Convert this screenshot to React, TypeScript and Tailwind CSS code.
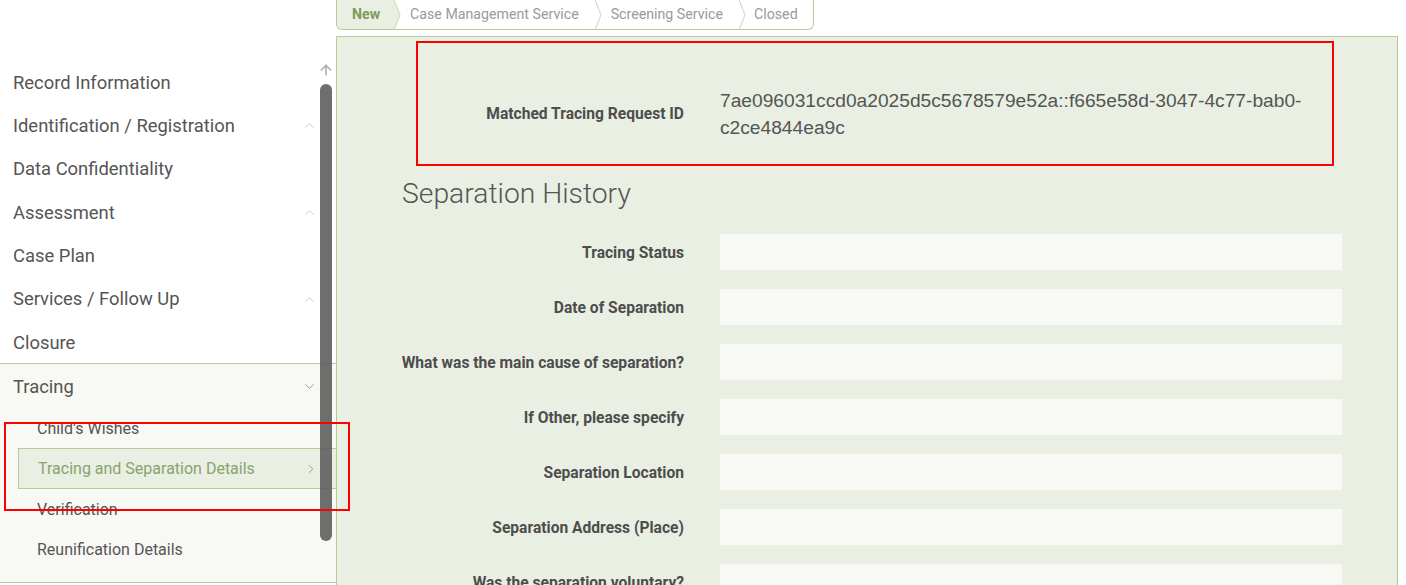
import { ChevronUp, ChevronDown, ChevronRight, ArrowUp } from "lucide-react";

const mainItems = [
    { label: "Record Information", sub: false },
    { label: "Identification / Registration", sub: true },
    { label: "Data Confidentiality", sub: false },
    { label: "Assessment", sub: true },
    { label: "Case Plan", sub: false },
    { label: "Services / Follow Up", sub: true },
    { label: "Closure", sub: false },
];

const tracingItems = ["Child's Wishes", "Tracing and Separation Details", "Verification", "Reunification Details"];

const fields = [
    "Tracing Status",
    "Date of Separation",
    "What was the main cause of separation?",
    "If Other, please specify",
    "Separation Location",
    "Separation Address (Place)",
    "Was the separation voluntary?",
];

function Chevron({ fill }: { fill?: boolean }) {
    return (
        <svg width="10" height="30" viewBox="0 0 10 30" className="shrink-0">
            {fill && <polygon points="0,0 6,15 0,30" fill="#e9efe3" />}
            <polyline points="0,0 6,15 0,30" fill="none" stroke="#c9d8b6" strokeWidth="1" />
        </svg>
    );
}

function Stepper() {
    return (
        <div className="inline-flex h-[30px] items-center rounded-b-md border border-t-0 border-[#b5cc98] pr-[15px] text-[14.2px] text-[#9a9a9a]">
            <div className="flex h-full items-center rounded-bl-md bg-[#e9efe3] pl-[15px] pr-[14px] pt-[1px] font-bold text-[#7d9a5b]">New</div>
            <Chevron fill />
            <div className="pl-[6px] pr-[16px] pt-[1px]">Case Management Service</div>
            <Chevron />
            <div className="pl-[6px] pr-[16px] pt-[1px]">Screening Service</div>
            <Chevron />
            <div className="pl-[5px] pt-[1px]">Closed</div>
        </div>
    );
}

function Sidebar() {
    return (
        <div className="relative w-[336px] shrink-0 pt-[61px] text-[#555]">
            {mainItems.map((item) => (
                <div key={item.label} className="flex h-[43.3px] items-center justify-between pl-[13px] pr-[19px] text-[18.4px]">
                    <span>{item.label}</span>
                    {item.sub && <ChevronUp size={15} strokeWidth={1.5} className="text-[#c4c4c4]" />}
                </div>
            ))}
            <div className="-mt-[1px] border-y border-[#b5cc98] bg-[#f8f9f4] pb-[13px]">
                <div className="flex h-[44px] items-center justify-between pl-[13px] pr-[19px] pt-[1px] text-[18.4px]">
                    <span>Tracing</span>
                    <ChevronDown size={15} strokeWidth={1.5} className="text-[#8aa36c]" />
                </div>
                {tracingItems.map((t) =>
                    t === "Tracing and Separation Details" ? (
                        <div key={t} className="ml-[18px] flex h-[41px] items-center justify-between border border-r-0 border-[#b5cc98] bg-[#e9efe3] pl-[19px] pr-[18px] pt-[1px] text-[16px] text-[#8aa36c]">
                            <span>{t}</span>
                            <ChevronRight size={14} strokeWidth={1.5} />
                        </div>
                    ) : (
                        <div key={t} className="flex h-[40px] items-center pl-[37px] pt-[1px] text-[16px]">
                            {t}
                        </div>
                    )
                )}
            </div>

            {/* scrollbar */}
            <ArrowUp size={16} strokeWidth={2.5} className="absolute left-[318px] top-[62px] text-[#b0b0b0]" />
            <div className="absolute left-[320px] top-[84px] h-[457px] w-[12px] rounded-full bg-[#5e5e5e]/90" />
        </div>
    );
}

export default function App() {
    return (
        <div className="relative h-[585px] w-[1406px] overflow-hidden bg-white" style={{ fontFamily: "Roboto, 'Liberation Sans', sans-serif" }}>
            <div className="flex">
                <Sidebar />
                <div className="w-[1062px] shrink-0">
                    <Stepper />
                    <div className="mt-[6px] h-[600px] border border-b-0 border-[#b5cc98] bg-[#e9efe3] pl-[63px] pt-[50px]">
                        <div className="grid grid-cols-[284px_622px] items-center gap-x-[36px]">
                            <div className="pt-[2px] text-right text-[15.6px] font-bold text-[#4d4d4d]">Matched Tracing Request ID</div>
                            <div className="text-[19.2px] leading-[27px] text-[#555]" style={{ fontFamily: "'Liberation Sans', Arial, sans-serif" }}>
                                7ae096031ccd0a2025d5c5678579e52a::f665e58d-3047-4c77-bab0-c2ce4844ea9c
                            </div>
                        </div>

                        <h2 className="mt-[36px] pl-[2px] text-[28.3px] font-light leading-[34px] text-[#555]">Separation History</h2>

                        <div className="mt-[23px] grid grid-cols-[284px_622px] items-center gap-x-[36px] gap-y-[19px]">
                            {fields.map((f) => (
                                <>
                                    <div key={f + "-l"} className="whitespace-nowrap pt-[3px] text-right text-[15.6px] font-bold text-[#4d4d4d]">{f}</div>
                                    <div key={f + "-i"} className="h-[36px] bg-[#f8f9f4]" />
                                </>
                            ))}
                        </div>
                    </div>
                </div>
            </div>

            {/* annotation boxes */}
            <div className="absolute left-[416px] top-[41px] h-[125px] w-[918px] border-2 border-[#ff0000]" />
            <div className="absolute left-[4px] top-[422px] h-[89px] w-[346px] border-2 border-[#ff0000]" />
        </div>
    );
}
